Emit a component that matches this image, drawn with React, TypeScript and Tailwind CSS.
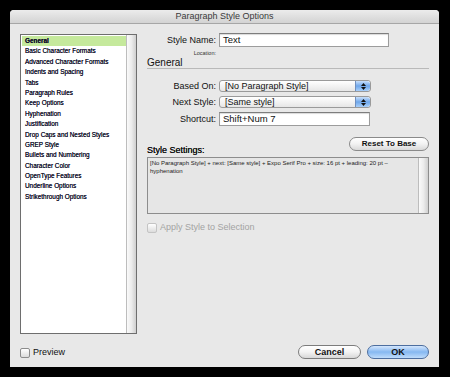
import React from 'react'

const sections = [
  'General',
  'Basic Character Formats',
  'Advanced Character Formats',
  'Indents and Spacing',
  'Tabs',
  'Paragraph Rules',
  'Keep Options',
  'Hyphenation',
  'Justification',
  'Drop Caps and Nested Styles',
  'GREP Style',
  'Bullets and Numbering',
  'Character Color',
  'OpenType Features',
  'Underline Options',
  'Strikethrough Options',
]

function Stepper() {
  return (
    <span className="flex w-[15px] flex-col items-center justify-center gap-[1px] rounded-r-[3px] border-l border-[#6f8fbf] bg-gradient-to-b from-[#c9e0fb] via-[#6ea6ea] to-[#a9d0fa]">
      <svg width="5" height="3" viewBox="0 0 5 3">
        <path d="M2.5 0 L5 3 L0 3 Z" fill="#111" />
      </svg>
      <svg width="5" height="3" viewBox="0 0 5 3">
        <path d="M0 0 L5 0 L2.5 3 Z" fill="#111" />
      </svg>
    </span>
  )
}

function Select({ value }: { value: string }) {
  return (
    <div className="flex h-[12px] w-[152px] overflow-hidden rounded-[3px] border border-[#9a9a9a] bg-gradient-to-b from-white to-[#e6e6e6]">
      <span className="flex-1 pl-[5px] text-[9px] leading-[10px] text-[#111]">{value}</span>
      <Stepper />
    </div>
  )
}

function Field({ value, width }: { value: string; width: string }) {
  return (
    <div
      className={`h-[14px] ${width} border border-[#9c9c9c] border-t-[#7d7d7d] bg-white pl-[3px] text-[9.5px] leading-[12px] text-[#111] shadow-[inset_0_1px_1px_rgba(0,0,0,0.15)]`}
    >
      {value}
    </div>
  )
}

function Row({ label, children }: { label: string; children: React.ReactNode }) {
  return (
    <div className="flex items-center gap-[3px]">
      <span className="w-[69px] text-right text-[9px] leading-[11px] text-[#111]">{label}</span>
      {children}
    </div>
  )
}

function Checkbox({ label, disabled }: { label: string; disabled?: boolean }) {
  return (
    <label className="flex items-center gap-[3px]">
      <span
        className={`h-[10px] w-[10px] rounded-[2px] border bg-gradient-to-b from-white to-[#dcdcdc] ${
          disabled ? 'border-[#c4c4c4]' : 'border-[#8c8c8c]'
        }`}
      />
      <span className={`text-[9px] leading-[11px] ${disabled ? 'text-[#a3a3a3]' : 'text-[#111]'}`}>
        {label}
      </span>
    </label>
  )
}

function Scrollbar() {
  return (
    <div className="w-[10px] shrink-0 border-l border-[#bdbdbd] bg-gradient-to-r from-[#fafafa] via-[#ececec] to-[#cfcfcf]" />
  )
}

export default function App() {
  return (
    <div className="h-[377px] w-[450px] bg-black pl-[10px] pt-[10px] font-['Liberation_Sans',Arial,sans-serif]">
      <div className="flex h-[357px] w-[429px] flex-col overflow-hidden rounded-t-[4px] bg-[#e8e8e8]">
        <div className="flex h-[14px] shrink-0 items-center justify-center border-b border-[#a6a6a6] bg-gradient-to-b from-[#ececec] to-[#d3d3d3] text-[9px] leading-[11px] text-[#3a3a3a]">
          Paragraph Style Options
        </div>

        <div className="flex flex-1 gap-[10px] px-[10px] pb-[8px] pt-[9px]">
          <div className="flex w-[117px] flex-col">
            <div className="mt-[1px] flex h-[300px] border border-[#6e6e6e] bg-white">
              <ul className="flex-1 pl-[1px] pt-[1px]">
                {sections.map((s, i) => (
                  <li
                    key={s}
                    className={`h-[10.4px] pl-[3px] text-[6.4px] leading-[10.4px] text-[#14142c] [text-shadow:0_0_0.4px_#14142c] ${
                      i === 0 ? 'bg-[#c5e99c] font-bold' : ''
                    }`}
                  >
                    {s}
                  </li>
                ))}
              </ul>
              <Scrollbar />
            </div>
            <div className="mt-[13px]">
              <Checkbox label="Preview" />
            </div>
          </div>

          <div className="flex w-[282px] flex-col">
            <Row label="Style Name:">
              <Field value="Text" width="w-[170px]" />
            </Row>
            <div className="mt-[2px] w-[69px] text-right text-[5.5px] leading-[8px] text-[#333]">
              Location:
            </div>
            <div className="h-[12px] border-b border-[#b9b9b9] text-[10px] leading-[11px] text-[#111]">
              General
            </div>

            <div className="mt-[11px] flex flex-col gap-[4px]">
              <Row label="Based On:">
                <Select value="[No Paragraph Style]" />
              </Row>
              <Row label="Next Style:">
                <Select value="[Same style]" />
              </Row>
              <Row label="Shortcut:">
                <Field value="Shift+Num 7" width="w-[151px]" />
              </Row>
            </div>

            <div className="mt-[11px] flex h-[20px] items-start justify-between">
              <span className="mt-[8px] text-[9px] leading-[11px] text-[#111] [text-shadow:0_0_0.4px_#111]">
                Style Settings:
              </span>
              <button className="h-[14px] w-[80px] rounded-full border border-[#8a8a8a] bg-gradient-to-b from-white via-[#f2f2f2] to-[#d9d9d9] text-[8px] font-bold leading-[12px] text-[#111]">
                Reset To Base
              </button>
            </div>

            <div className="flex h-[57px] border border-[#8d8d8d] bg-[#e6e6e6]">
              <p className="flex-1 pl-[2px] pr-[10px] pt-[2px] text-[6px] leading-[7.5px] text-[#222]">
                [No Paragraph Style] + next: [Same style] + Expo Serif Pro + size: 16 pt + leading: 20 pt – hyphenation
              </p>
              <Scrollbar />
            </div>

            <div className="mt-[8px]">
              <Checkbox label="Apply Style to Selection" disabled />
            </div>

            <div className="mt-auto flex justify-end gap-[6px]">
              <button className="h-[14px] w-[63px] rounded-full border border-[#7c7c7c] bg-gradient-to-b from-white via-[#f3f3f3] to-[#d8d8d8] text-[9px] font-bold leading-[12px] text-[#111]">
                Cancel
              </button>
              <button className="h-[14px] w-[62px] rounded-full border border-[#4d6e9f] bg-gradient-to-b from-[#d4e6fc] via-[#86b8f1] to-[#bfdcfb] text-[9px] font-bold leading-[12px] text-[#111]">
                OK
              </button>
            </div>
          </div>
        </div>
      </div>
    </div>
  )
}
